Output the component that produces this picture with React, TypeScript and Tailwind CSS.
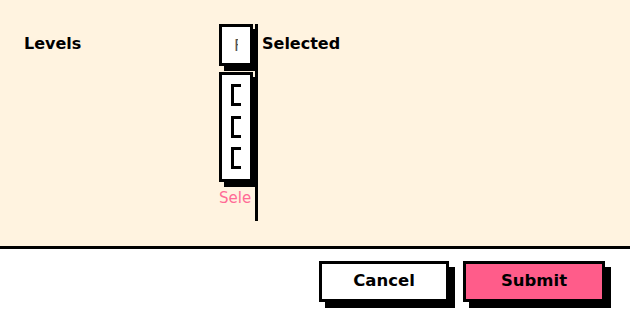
export default function App() {
  const items = ["Beginner", "Intermediate", "Advanced"];
  return (
    <div className="w-[630px] h-[322px] flex flex-col bg-white font-['DejaVu_Sans',sans-serif] text-black">
      <div className="h-[249px] shrink-0 flex bg-[#fff3e0] p-6 border-b-[3px] border-black">
        <div className="w-[195px] pt-[8px] text-[16px] font-bold leading-6">Levels</div>
        <div className="flex h-[197px]">
          <div className="w-[39px] pr-[2px] border-r-[3px] border-black flex flex-col">
            <div className="h-[42px] border-[3px] border-black bg-white shadow-[5px_5px_0_0_#000]">
              <input
                placeholder="Filter"
                className="w-full h-full px-3 bg-transparent outline-none text-[16px] placeholder:text-[#555]"
              />
            </div>
            <div className="mt-[6px] h-[110px] border-[3px] border-black bg-white shadow-[5px_5px_0_0_#000] px-[9px] py-[9px]">
              <div className="overflow-hidden flex flex-col gap-[9px]">
                {items.map((item) => (
                  <label key={item} className="flex items-center gap-2 whitespace-nowrap">
                    <span className="w-[22px] h-[22px] shrink-0 border-[3px] border-black bg-white" />
                    <span className="text-[15px]">{item}</span>
                  </label>
                ))}
              </div>
            </div>
            <div className="mt-[6px] w-[32px] overflow-hidden whitespace-nowrap text-[15px] leading-5 text-[#ff6b96]">
              Select at least one level
            </div>
          </div>
          <div className="pl-1 pt-[8px] text-[16px] font-bold leading-6">Selected</div>
        </div>
      </div>
      <div className="flex justify-end gap-[14px] pt-3 pr-[25px]">
        <button className="w-[130px] h-[41px] border-[3px] border-black bg-white shadow-[6px_6px_0_0_#000] text-[16.5px] font-bold">
          Cancel
        </button>
        <button className="w-[142px] h-[41px] border-[3px] border-black bg-[#ff5c8a] shadow-[6px_6px_0_0_#000] text-[16.5px] font-bold">
          Submit
        </button>
      </div>
    </div>
  );
}
